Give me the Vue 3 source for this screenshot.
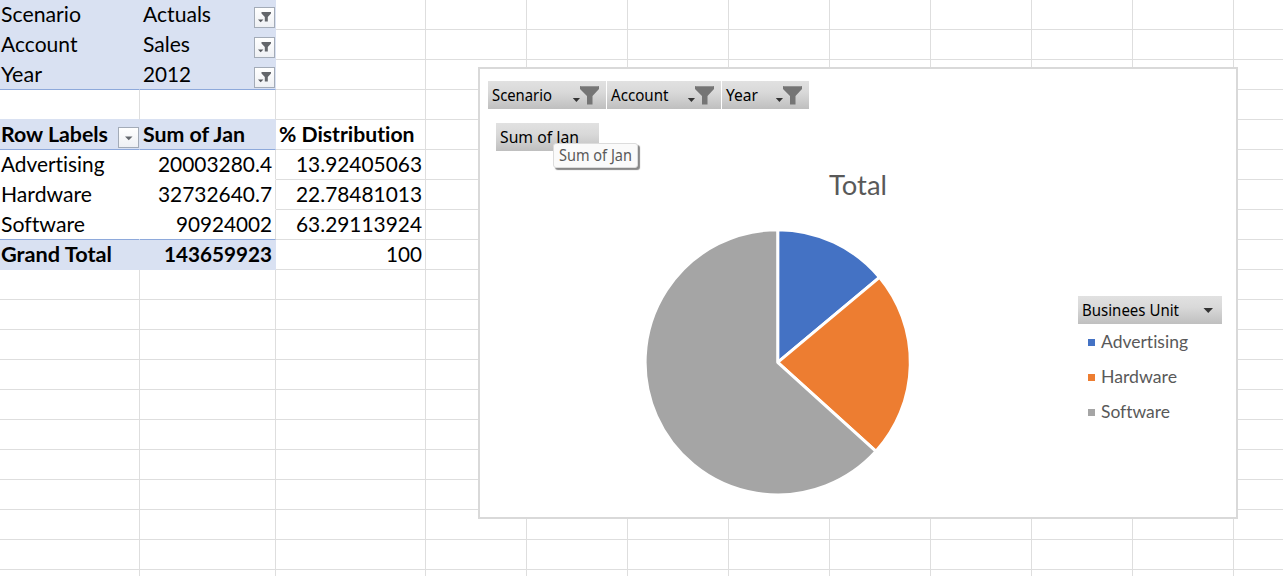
<script setup>
import { h } from 'vue'

// Single line of text drawn at a fixed advance width.
const Label = (props) =>
  h('svg', { class: 'label', width: props.w, height: props.h, style: { display: 'block', overflow: 'visible', flex: 'none' } }, [
    h('text', { x: 0, y: props.base, textLength: props.w, lengthAdjust: 'spacingAndGlyphs', fill: 'currentColor' }, props.text),
  ])
Label.props = ['text', 'w', 'h', 'base']

const blank = () => ({})
const rows = [
  { kind: 'page', a: ['Scenario', 80], b: ['Actuals', 68], c: null, filter: true },
  { kind: 'page', a: ['Account', 76.5], b: ['Sales', 47], c: null, filter: true },
  { kind: 'page rule', a: ['Year', 41], b: ['2012', 48], c: null, filter: true },
  { kind: 'spacer' },
  { kind: 'head rule', a: ['Row Labels', 107], b: ['Sum of Jan', 102], c: ['% Distribution', 135.5], menu: true },
  { kind: 'data', a: ['Advertising', 103.5], b: ['20003280.4', 114], c: ['13.92405063', 126] },
  { kind: 'data', a: ['Hardware', 91], b: ['32732640.7', 114], c: ['22.78481013', 126] },
  { kind: 'data rule', a: ['Software', 84], b: ['90924002', 96], c: ['63.29113924', 126] },
  { kind: 'total', a: ['Grand Total', 111], b: ['143659923', 108], c: ['100', 36] },
  ...Array.from({ length: 11 }, blank),
]

const fields = [
  { text: 'Scenario', w: 60, size: 118 },
  { text: 'Account', w: 57.5, size: 114 },
  { text: 'Year', w: 32, size: 87 },
]

const slices = [
  { name: 'Advertising', w: 87, value: 13.92405063, color: '#4472c4' },
  { name: 'Hardware', w: 76, value: 22.78481013, color: '#ed7d31' },
  { name: 'Software', w: 69, value: 63.29113924, color: '#a5a5a5' },
]
const cx = 139.7
const cy = 140.3
const r = 132.6
let start = 0
for (const s of slices) {
  const end = start + (s.value / 100) * Math.PI * 2
  const at = (t) => `${(cx + r * Math.sin(t)).toFixed(2)} ${(cy - r * Math.cos(t)).toFixed(2)}`
  s.d = `M${cx} ${cy}L${at(start)}A${r} ${r} 0 ${end - start > Math.PI ? 1 : 0} 1 ${at(end)}Z`
  start = end
}
</script>

<template>
  <main class="sheet">
    <div v-for="(row, i) in rows" :key="i" class="row" :class="row.kind">
      <div class="cell a">
        <Label v-if="row.a" :text="row.a[0]" :w="row.a[1]" :h="29" :base="22" />
        <span v-if="row.menu" class="drop">
          <svg width="19" height="19"><path d="M6 8.5H13.5L9.75 12.3Z" fill="#62666c" /></svg>
        </span>
      </div>
      <div class="cell b">
        <Label v-if="row.b" :text="row.b[0]" :w="row.b[1]" :h="29" :base="22" />
        <span v-if="row.filter" class="drop">
          <svg width="19" height="19">
            <path d="M6.5 4H16V5.5L12.8 9V13.5H9.8V9L6.5 5.5Z" fill="#63666b" />
            <path d="M3 11.5H8.4L5.7 14.2Z" fill="#55585d" />
          </svg>
        </span>
      </div>
      <div class="cell c">
        <Label v-if="row.c" :text="row.c[0]" :w="row.c[1]" :h="29" :base="22" />
      </div>
      <div v-for="n in 9" :key="n" class="cell"></div>
    </div>

    <section class="chart">
      <div class="fields">
        <div v-for="f in fields" :key="f.text" class="field" :style="{ width: f.size + 'px' }">
          <Label :text="f.text" :w="f.w" :h="28" :base="20" />
          <svg class="funnel" width="36" height="28">
            <path d="M2.8 17H10L6.4 21Z" fill="#333" />
            <path d="M10 5H29V8L22.5 15V23.5H17V15L10 8Z" fill="#757575" />
            <path d="M10.5 5.5H28.5" stroke="#929292" />
          </svg>
        </div>
      </div>
      <div class="field value">
        <Label text="Sum of Jan" :w="79" :h="28" :base="20" />
        <div class="tip"><Label text="Sum of Jan" :w="73" :h="23" :base="17" /></div>
      </div>
      <div class="title"><Label text="Total" :w="58" :h="40" :base="29" /></div>
      <div class="plot">
        <svg width="280" height="280">
          <path v-for="s in slices" :key="s.name" :d="s.d" :fill="s.color" stroke="#fff" stroke-width="3" stroke-linejoin="round" />
        </svg>
        <div class="legend">
          <div class="field unit">
            <Label text="Businees Unit" :w="97" :h="28" :base="20" />
            <svg width="12" height="28"><path d="M1.5 12H11L6.25 17Z" fill="#333" /></svg>
          </div>
          <div v-for="s in slices" :key="s.name" class="entry">
            <i :style="{ background: s.color }"></i>
            <Label :text="s.name" :w="s.w" :h="35" :base="23" />
          </div>
        </div>
      </div>
    </section>
  </main>
</template>

<style>
body { margin: 0; overflow: hidden; }
</style>

<style scoped>
.sheet {
  position: relative;
  width: 1283px;
  height: 576px;
  overflow: hidden;
  background: #fff;
  color: #000;
  font-family: Lato, "Liberation Sans", sans-serif;
  font-size: 21px;
  font-variant-ligatures: none;
}
.row {
  display: grid;
  grid-template-columns: 140px 136px 150px repeat(9, 101px);
  height: 30px;
}
.cell {
  box-sizing: border-box;
  display: flex;
  border-right: 1px solid #dedede;
  border-bottom: 1px solid #dedede;
}
.cell.a { padding-left: 1px; }
.cell.b { padding-left: 3px; }
.cell.c { padding-left: 3px; }
.page .a, .page .b, .head .a, .head .b, .total .a, .total .b {
  background: #d9e1f2;
  border-color: #d9e1f2;
}
.spacer .a, .spacer .b { border-bottom-color: #d9e1f2; }
.data .a { border-color: #fff; }
.data .b { border-bottom-color: #fff; }
.row.rule .a, .row.rule .b { border-bottom-color: #8ea9db; }
.head, .total .a, .total .b { font-weight: 700; }
.data .b, .data .c, .total .b, .total .c { justify-content: flex-end; padding-right: 3px; }
.drop {
  box-sizing: border-box;
  flex: none;
  width: 21px;
  height: 21px;
  margin: 7px 0 0 auto;
  border: 1px solid #a3abb7;
  background: linear-gradient(#fff, #eef0f4);
}
.drop svg { display: block; }

.chart {
  position: absolute;
  left: 478px;
  top: 67px;
  box-sizing: border-box;
  width: 760px;
  height: 452px;
  padding: 12px 8px;
  border: 2px solid #d9d9d9;
  background: #fff;
}
.fields { display: flex; gap: 1px; }
.field {
  box-sizing: border-box;
  display: flex;
  height: 28px;
  padding-left: 4px;
  background: linear-gradient(#e1e1e1, #d9d9d9 40%, #bfbfbf);
  font-family: "Noto Sans", "Open Sans", sans-serif;
  font-size: 16.5px;
}
.funnel { display: block; margin-left: auto; }
.value { position: relative; width: 103px; margin: 14px 0 0 8px; }
.tip {
  position: absolute;
  left: 57px;
  top: 20px;
  box-sizing: border-box;
  width: 85px;
  height: 25px;
  padding-left: 5px;
  border: 1px solid #dcdcdc;
  border-radius: 3px;
  background: #fafafa;
  box-shadow: 2px 2px 1px #888;
  color: #595959;
  font-size: 15.5px;
}
.title {
  display: flex;
  justify-content: center;
  margin-top: 15px;
  color: #595959;
  font-size: 26px;
}
.plot { display: flex; margin: 16px 0 0 150px; }
.legend { width: 144px; margin: 74px 0 0 160px; }
.unit { margin-bottom: 1px; }
.unit svg:last-child { margin: 0 8px 0 auto; }
.entry {
  display: flex;
  align-items: center;
  gap: 6px;
  height: 35px;
  padding-left: 10px;
  color: #595959;
  font-size: 17.5px;
}
.entry i { width: 7px; height: 7px; }
</style>
